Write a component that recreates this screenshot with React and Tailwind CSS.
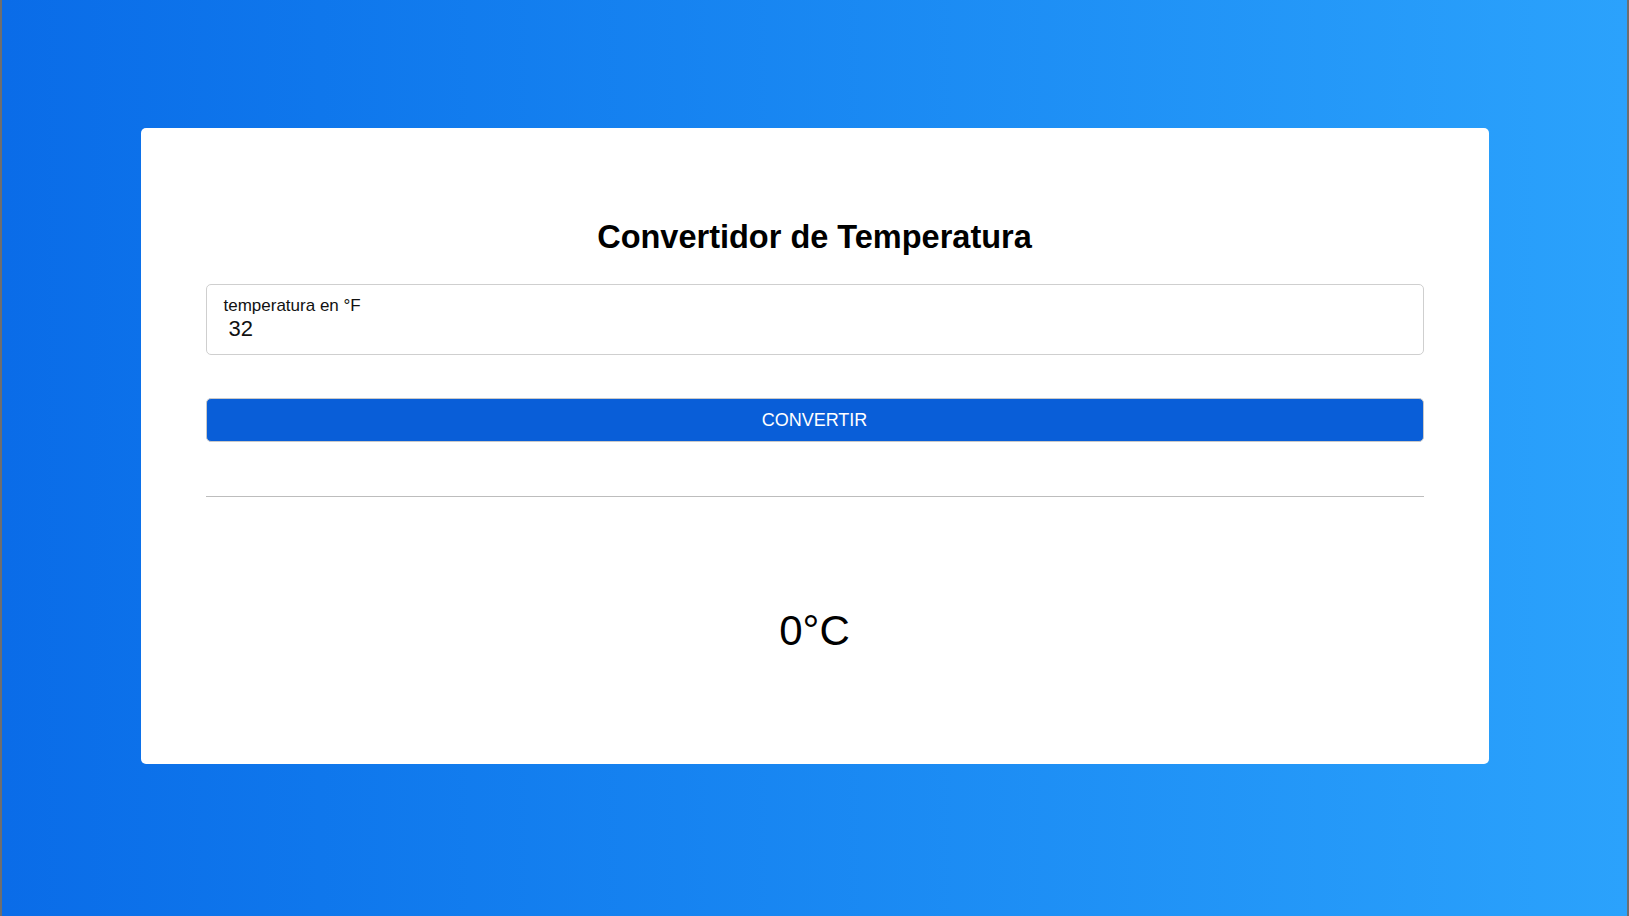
import { useState } from "react";

const App = () => {
	const [fahrenheit, setFahrenheit] = useState("32");
	const [celsius, setCelsius] = useState("0");

	const convert = () => {
		const f = parseFloat(fahrenheit);
		if (isNaN(f)) return;
		setCelsius(String(Math.round(((f - 32) * 5) / 9 * 100) / 100));
	};

	return (
		<div
			className="min-h-screen w-full border-x-2 border-[#6e6e6e] bg-linear-to-r from-[#0a6ce8] to-[#2ba2fc] pt-[128px]"
			style={{ fontFamily: '"Liberation Sans", Arial, sans-serif' }}
		>
			{/* Card */}
			<div className="mx-auto w-[1348px] rounded-[5px] bg-white px-[65px] pt-[90px] pb-[109px]">
				<h1 className="text-center text-[32.5px] font-bold leading-[38px] text-black">
					Convertidor de Temperatura
				</h1>

				{/* Input */}
				<label className="mt-[28px] flex h-[71px] flex-col rounded-[5px] border border-[#cfcfcf] pl-[17px] pr-4 pt-[11px]">
					<span className="text-[17px] leading-[20px] text-[#111]">
						temperatura en °F
					</span>
					<input
						type="text"
						value={fahrenheit}
						onChange={(e) => setFahrenheit(e.target.value)}
						className="w-full bg-transparent px-[5px] text-[22px] leading-[25px] text-[#111] outline-none"
					/>
				</label>

				<button
					onClick={convert}
					className="mt-[43px] flex h-[44px] w-full items-center justify-center rounded-[5px] border border-[#c9c9c9] bg-[#095ed8] text-[18px] text-white"
				>
					CONVERTIR
				</button>

				<hr className="mt-[54px] border-t-[1.5px] border-[#bdbdbd]" />

				<div className="mt-[110px] text-center text-[42px] leading-[48px] text-black">
					{celsius}°C
				</div>
			</div>
		</div>
	);
};

export default App;
